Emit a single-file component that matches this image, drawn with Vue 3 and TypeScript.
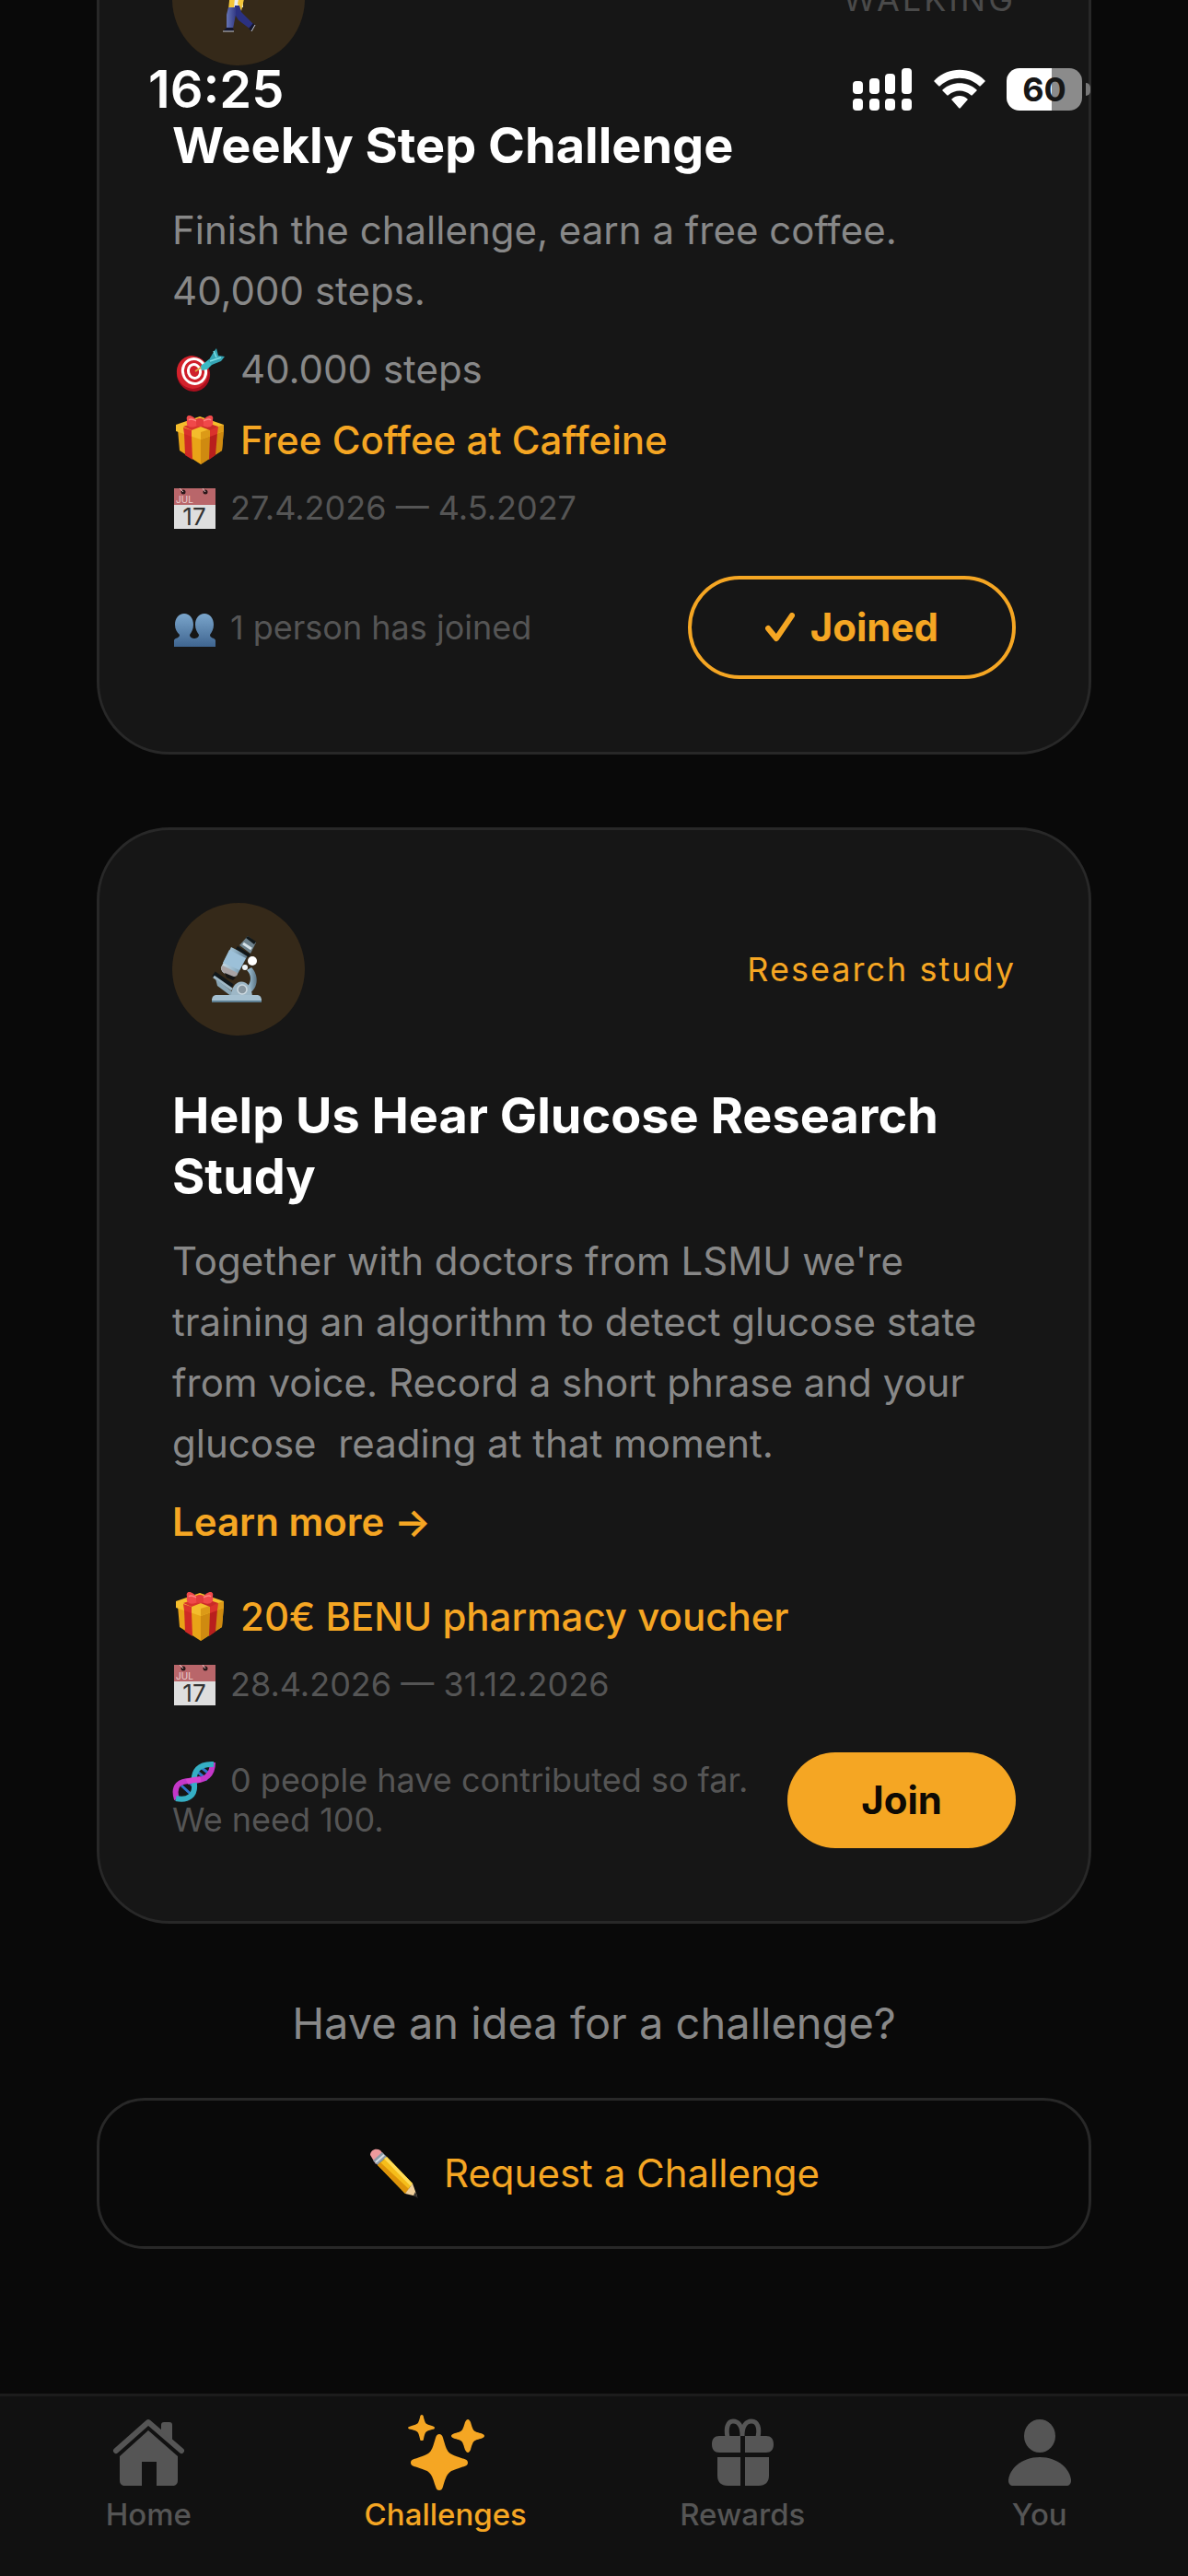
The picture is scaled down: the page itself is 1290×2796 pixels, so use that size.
<script setup lang="ts">
interface Challenge {
  id: string
  icon: string
  tag: string
  kind: 'activity' | 'study'
  title: string
  text: string
  goal?: string
  reward: string
  dates: string
  crowdIcon: string
  crowd: string
  joined: boolean
}

interface Tab {
  id: string
  label: string
  active: boolean
}

const challenges: Challenge[] = [
  {
    id: 'steps',
    icon: 'walker',
    tag: 'WALKING',
    kind: 'activity',
    title: 'Weekly Step Challenge',
    text: 'Finish the challenge, earn a free coffee.\n40,000 steps.',
    goal: '40.000 steps',
    reward: 'Free Coffee at Caffeine',
    dates: '27.4.2026 — 4.5.2027',
    crowdIcon: 'people',
    crowd: '1 person has joined',
    joined: true,
  },
  {
    id: 'glucose',
    icon: 'microscope',
    tag: 'Research study',
    kind: 'study',
    title: 'Help Us Hear Glucose Research Study',
    text: "Together with doctors from LSMU we're training an algorithm to detect glucose state from voice. Record a short phrase and your glucose  reading at that moment.",
    reward: '20€ BENU pharmacy voucher',
    dates: '28.4.2026 — 31.12.2026',
    crowdIcon: 'dna',
    crowd: '0 people have contributed so far. We need 100.',
    joined: false,
  },
]

const tabs: Tab[] = [
  { id: 'home', label: 'Home', active: false },
  { id: 'sparkles', label: 'Challenges', active: true },
  { id: 'rewards', label: 'Rewards', active: false },
  { id: 'you', label: 'You', active: false },
]
</script>

<template>
  <div class="screen">
    <svg class="sprite" aria-hidden="true">
      <defs>
        <linearGradient id="g-people" x1="0" y1="0" x2="0" y2="1">
          <stop offset="0" stop-color="#7ba6cc" />
          <stop offset="1" stop-color="#3f6590" />
        </linearGradient>
        <linearGradient id="g-steel" x1="0" y1="0" x2="1" y2="0">
          <stop offset="0" stop-color="#c9dbe6" />
          <stop offset="0.5" stop-color="#93b4c8" />
          <stop offset="1" stop-color="#5b7484" />
        </linearGradient>
        <linearGradient id="g-trousers" x1="0" y1="0" x2="1" y2="0">
          <stop offset="0" stop-color="#6574b4" />
          <stop offset="1" stop-color="#333a86" />
        </linearGradient>

        <symbol id="walker" viewBox="0 0 72 72">
          <circle cx="35" cy="8" r="7" fill="#f2c230" />
          <path d="M28 17h12l1 28H26z" fill="#e9edf0" />
          <path d="M28 20l-3 27 6-2 2-20zM39 22l3 14-3 13-4-8z" fill="#f3c63a" />
          <path d="M32 43h5l2 7 13 13-4 5-12-9-5-8z" fill="#2b3180" />
          <path d="M25 45l8 0 0 8-3 15h-7l0-15z" fill="url(#g-trousers)" />
          <path d="M23 67h7l1 4H19z M52 62l2 3-4 6-3-3z" fill="#15162b" />
          <path d="M19 71h12M54 64l-4 7" stroke="#c7cad2" stroke-width="1" fill="none" />
        </symbol>

        <symbol id="microscope" viewBox="0 0 72 72">
          <path d="M9 41l20 14" stroke="#11171a" stroke-width="6" />
          <path d="M9 44l20 14" stroke="#9fb8c6" stroke-width="3" />
          <path d="M11 46l20 16-2 4-16-12z" fill="#8aa6b5" />
          <path d="M50 34c8 8 8 22-2 28l-8-3c11-6 11-16 5-22z" fill="url(#g-steel)" />
          <path d="M28 66c0-22 22-22 23 0z" fill="#9db7c6" />
          <circle cx="40" cy="58" r="5" fill="#8997a0" stroke="#cddae1" stroke-width="1.5" />
          <path d="M7 70c0-4 2-6 5-6h44c3 0 5 2 5 6z" fill="#a5c0d0" />
          <path d="M7 70h54v2H7z" fill="#5e7e91" />
          <path d="M17 34l11-22 18 9-12 22c-6 3-18-3-17-9z" fill="url(#g-steel)" />
          <path d="M26 15l18 9-7 13-18-8z" fill="#9cc0d8" />
          <path d="M17 34c0 6 11 12 17 9l1-3-16-8z" fill="#a9a3a4" />
          <path d="M21 40l12 5-3 3-7-3z" fill="#151515" />
          <path d="M37 10l9-10 9 7-6 12z" fill="#6e828d" />
          <path d="M35 11l14 9-2 3-14-9zM46 0l9 6-2 3-9-7z" fill="#111719" />
          <path d="M41 8l9 6" stroke="#d5e2e9" stroke-width="3" />
          <circle cx="51" cy="27" r="5" fill="#fff" />
          <circle cx="43" cy="34" r="3" fill="#edf4f8" />
        </symbol>

        <symbol id="target" viewBox="0 0 56 56">
          <ellipse cx="21" cy="34" rx="18" ry="19" fill="#a90f1e" transform="rotate(-18 21 34)" />
          <ellipse cx="20" cy="32" rx="17" ry="18" fill="#d3222c" transform="rotate(-18 20 32)" />
          <ellipse cx="22" cy="31" rx="14" ry="15" fill="#fff" transform="rotate(-18 22 31)" />
          <ellipse cx="22" cy="31" rx="11" ry="12" fill="#cf1f2a" transform="rotate(-18 22 31)" />
          <ellipse cx="22" cy="31" rx="8" ry="9" fill="#fff" transform="rotate(-18 22 31)" />
          <ellipse cx="22" cy="31" rx="5" ry="6" fill="#cf1f2a" transform="rotate(-18 22 31)" />
          <path d="M23 31l9-6" stroke="#d9a441" stroke-width="2" />
          <path d="M29 25l9-7 5 4-7 7-6 1z" fill="#3cb9c4" />
          <path d="M37 20l6-10 3-4 2 8 7 1-4 5-10 4z" fill="#35a5b5" />
          <path d="M39 20l12-4M43 9l3 7" stroke="#7fe0e6" stroke-width="1.5" />
        </symbol>

        <symbol id="gift" viewBox="0 0 56 56">
          <path d="M4 17l25 8 25-8-2 23-23 15L6 40z" fill="#e9a417" />
          <path d="M29 25l25-8-2 23-23 15z" fill="#cf8a10" />
          <path d="M2 12l26-9 26 9v7l-25 9-27-9z" fill="#f4bd2c" />
          <path d="M29 20l25-8v7l-25 9z" fill="#dc9a17" />
          <path d="M11 21l8 3 1 26-8-5z" fill="#cf2a25" />
          <path d="M39 24l8-3-2 24-7 5z" fill="#b81f1d" />
          <path d="M10 15l9 3v7l-8-3zM39 17l9-3-1 8-8 3z" fill="#da322c" />
          <path d="M10 14l24-8 8 3-23 9z" fill="#d8332d" />
          <path d="M48 14L24 6l-8 3 23 9z" fill="#c92b27" />
          <path d="M26 9C20 0 12 0 14 7c-2 8 6 10 13 5zM30 9c6-9 14-9 12-2 2 8-6 10-13 5z" fill="#f0494a" />
          <path d="M26 9c-5-3-8-4-10-2M30 9c5-3 8-4 10-2" stroke="#ff8580" stroke-width="1.5" fill="none" />
          <rect x="24" y="5" width="8" height="9" rx="3" fill="#e23b3c" />
        </symbol>

        <symbol id="calendar" viewBox="0 0 48 48">
          <path d="M2 2h45v44H2z" fill="#dedede" />
          <path d="M2 2h45v18H2z" fill="#b9666a" />
          <circle cx="12" cy="6" r="2.500" fill="#2a1719" />
          <circle cx="36" cy="6" r="2.500" fill="#2a1719" />
          <path d="M8 2l4 4M33 2l3 4" stroke="#e5c4c5" stroke-width="1" />
          <text x="4" y="18" font-family="Inter, sans-serif" font-size="10" fill="#ecd3d4">JUL</text>
          <text x="24" y="42" text-anchor="middle" font-family="Inter, sans-serif" font-size="26" fill="#333">17</text>
        </symbol>

        <symbol id="people" viewBox="0 0 48 48">
          <path
            d="M13 8c6 0 10 5 10 12 0 5-2 8-4 11 0 4 5 4 5 4s5 0 5-4c-2-3-4-6-4-11 0-7 4-12 10-12s10 5 10 12c0 5-2 8-4 11 0 4 5 3 6 6v7H2v-7c1-3 6-2 6-6-3-3-5-6-5-11 0-7 4-12 10-12z"
            fill="url(#g-people)"
          />
        </symbol>

        <symbol id="dna" viewBox="0 0 48 48">
          <path d="M10 29l12 11M17 24l9 9M26 13l12 10M31 9l10 8" stroke="#2c74c9" stroke-width="3" />
          <path d="M5 44c-5-16 4-20 15-20 13 0 24-4 24-20" stroke="#c437c9" stroke-width="6" fill="none" />
          <path d="M4 43c14 3 21-4 20-15C22 13 29 5 45 6" stroke="#35afc4" stroke-width="6" fill="none" />
          <path d="M16 25c4-2 10-2 15-3" stroke="#d545d0" stroke-width="6" fill="none" />
        </symbol>

        <symbol id="pencil" viewBox="0 0 56 56">
          <path d="M2 8c0-5 6-8 11-5l5 6-10 9z" fill="#ee9a9d" />
          <path d="M5 14L15 5l5 5-10 9z" fill="#8d9ba8" />
          <path d="M8 16l9-8" stroke="#d6dde2" stroke-width="2" />
          <path d="M10 19l10-9 28 29-8 11z" fill="#f6be1a" />
          <path d="M10 19l3-3 31 29-4 5z" fill="#dd9309" />
          <path d="M17 12l3-2 28 29-2 3z" fill="#ffdc55" />
          <path d="M40 50l8-11 5 14z" fill="#f0cf9a" />
          <path d="M49 52l2-4 3 7z" fill="#33302d" />
        </symbol>

        <symbol id="home" viewBox="0 0 84 84">
          <path
            d="M7 39L42 8L78 39"
            fill="none"
            stroke="currentColor"
            stroke-width="6"
            stroke-linecap="round"
            stroke-linejoin="round"
          />
          <path d="M56 18V11c0-2 1-3 3-3h6c2 0 3 1 3 3v20z" />
          <path d="M42 17L74 45v26c0 4-2 6-6 6H51V51H35v26H17c-4 0-6-2-6-6V45z" />
        </symbol>

        <symbol id="sparkles" viewBox="0 0 84 84">
          <path
            d="M35 21c2 0 3 1 4 4 5 17 5 17 20 22 4 1 7 2 7 5s-3 4-7 5c-15 5-15 5-20 21-1 3-2 4-4 4s-3-1-4-4c-5-16-5-16-20-21-4-1-7-2-7-5s3-4 7-5c15-5 15-5 20-22 1-3 2-4 4-4z"
          />
          <path
            d="M66 5c1 0 2 1 3 3 3 10 3 10 11 12 3 1 4 2 4 3s-1 2-4 3c-8 2-8 2-11 12-1 2-2 3-3 3s-2-1-3-3c-3-10-3-10-11-12-3-1-4-2-4-3s1-2 4-3c8-2 8-2 11-12 1-2 2-3 3-3z"
          />
          <path
            d="M16 0c1 0 2 1 2 3 2 7 2 7 9 9 2 1 3 1 3 2s-1 2-3 2c-7 2-7 2-9 10 0 2-1 2-2 2s-2 0-2-2c-2-8-2-8-9-10-2 0-4-1-4-2s2-1 4-2c7-2 7-2 9-9 0-2 1-3 2-3z"
          />
        </symbol>

        <symbol id="rewards" viewBox="0 0 84 84">
          <path
            d="M42 23c0-12-5-16-10-16-6 0-8 8-6 17M42 23c0-12 5-16 10-16 7 0 9 8 7 17"
            fill="none"
            stroke="currentColor"
            stroke-width="5"
          />
          <path d="M17 23h23v18H17c-5 0-8-3-8-9s3-9 8-9zM45 23h23c5 0 8 3 8 9s-3 9-8 9H45z" />
          <path d="M15 46h25v31H26c-7 0-11-4-11-11zM45 46h26v20c0 7-4 11-11 11H45z" />
        </symbol>

        <symbol id="you" viewBox="0 0 84 84">
          <ellipse cx="42" cy="23" rx="17" ry="18" />
          <path d="M42 46c20 0 33 13 34 25 0 4-2 6-5 6H13c-3 0-5-2-5-6 1-12 14-25 34-25z" />
        </symbol>
      </defs>
    </svg>

    <header class="status">
      <time class="clock">16:25</time>
      <div class="indicators">
        <svg class="signal" viewBox="0 0 65 46" aria-label="Signal">
          <rect x="0" y="14" width="11" height="14" rx="4" />
          <rect x="18" y="11" width="11" height="17" rx="4" />
          <rect x="35" y="6" width="11" height="22" rx="4" />
          <rect x="53" y="0" width="11" height="28" rx="4" />
          <rect v-for="x in [0, 18, 35, 53]" :key="x" :x="x" y="33" width="11" height="13" rx="4" />
        </svg>
        <svg class="wifi" viewBox="0 0 56 46" aria-label="Wi-Fi">
          <path d="M1 13C16-2 40-2 55 13c1 1 1 1 0 2l-4 4c-1 1-1 1-2 0-12-11-30-11-42 0-1 1-1 1-2 0l-4-4c-1-1-1-1 0-2z" />
          <path d="M10 23c10-9 26-9 36 0 1 1 1 1 0 2l-4 4c-1 1-1 1-2 0-7-6-17-6-24 0-1 1-1 1-2 0l-4-4c-1-1-1-1 0-2z" />
          <path d="M20 33c4-4 12-4 16 0 1 1 1 1 0 2l-7 8c-1 1-1 1-2 0l-7-8c-1-1-1-1 0-2z" />
        </svg>
        <div class="battery"><span class="level">60</span></div>
      </div>
    </header>

    <main class="content">
      <article v-for="c in challenges" :key="c.id" class="card">
        <div class="card-top">
          <span class="badge"><svg class="badge-icon"><use :href="'#' + c.icon" /></svg></span>
          <span class="tag" :class="c.kind">{{ c.tag }}</span>
        </div>
        <h2 class="title">{{ c.title }}</h2>
        <p class="text">{{ c.text }}</p>
        <a v-if="c.kind === 'study'" class="more" href="#">Learn more →</a>
        <p v-if="c.goal" class="row"><svg class="emoji"><use href="#target" /></svg>{{ c.goal }}</p>
        <p class="row reward"><svg class="emoji"><use href="#gift" /></svg>{{ c.reward }}</p>
        <p class="dates"><svg class="emoji small"><use href="#calendar" /></svg>{{ c.dates }}</p>
        <div class="card-foot">
          <p class="crowd"><svg class="emoji small"><use :href="'#' + c.crowdIcon" /></svg>{{ c.crowd }}</p>
          <button v-if="c.joined" type="button" class="pill outline">
            <svg class="tick" viewBox="0 0 32 32"><path d="M3 17l9 11L29 3" /></svg>Joined
          </button>
          <button v-else type="button" class="pill solid">Join</button>
        </div>
      </article>

      <section class="idea">
        <p class="question">Have an idea for a challenge?</p>
        <button type="button" class="request">
          <svg class="pencil"><use href="#pencil" /></svg>Request a Challenge
        </button>
      </section>
    </main>

    <nav class="tabs">
      <a v-for="t in tabs" :key="t.id" href="#" class="tab" :class="{ active: t.active }">
        <svg class="tab-icon"><use :href="'#' + t.id" /></svg>
        <span>{{ t.label }}</span>
      </a>
    </nav>
  </div>
</template>

<style>
html,
body {
  background: #090909;
}
</style>

<style scoped>
.screen {
  position: relative;
  box-sizing: border-box;
  height: 100vh;
  overflow: hidden;
  display: flex;
  flex-direction: column;
  background: #090909;
  color: #888;
  font-family: Inter, 'Liberation Sans', sans-serif;
  font-size: 42px;
}

.sprite {
  position: absolute;
  width: 0;
  height: 0;
}

h2,
p {
  margin: 0;
}

button {
  font: inherit;
  cursor: pointer;
}

a {
  text-decoration: none;
}

/* Status bar floats over the scrolled list */
.status {
  position: absolute;
  z-index: 2;
  top: 64px;
  left: 0;
  right: 0;
  display: flex;
  align-items: center;
  justify-content: space-between;
  padding: 0 115px 0 161px;
  color: #fff;
}

.clock {
  font-size: 56px;
  line-height: 66px;
  font-weight: 600;
}

.indicators {
  display: flex;
  align-items: center;
  gap: 23px;
  fill: #fff;
}

.signal {
  width: 65px;
  height: 46px;
}

.wifi {
  width: 56px;
  height: 46px;
}

.battery {
  position: relative;
  display: flex;
  justify-content: center;
  width: 82px;
  height: 46px;
  border-radius: 14px;
  background: linear-gradient(90deg, #fff 60%, #8b8b8b 60%);
}

.battery::after {
  content: '';
  position: absolute;
  right: -9px;
  top: 16px;
  width: 5px;
  height: 14px;
  border-radius: 0 5px 5px 0;
  background: #777;
}

.level {
  font-size: 36px;
  line-height: 46px;
  font-weight: 700;
  color: #161616;
}

/* List, scrolled part of the way into the first card */
.content {
  flex: 1;
  min-height: 0;
  display: flex;
  flex-direction: column;
  gap: 79px;
  margin-top: -155px;
  padding: 0 105px;
}

.card {
  display: flex;
  flex-direction: column;
  gap: 26px;
  padding: 79px;
  border: 3px solid #282828;
  border-radius: 79px;
  background: #161616;
}

.card-top {
  display: flex;
  align-items: center;
  justify-content: space-between;
  margin-bottom: 28px;
}

.badge {
  display: flex;
  align-items: center;
  justify-content: center;
  width: 144px;
  height: 144px;
  border-radius: 50%;
  background: #352919;
}

.badge-icon {
  width: 72px;
  height: 72px;
}

.tag {
  font-size: 36px;
  line-height: 44px;
}

.tag.activity {
  color: #4a4a4a;
  letter-spacing: 3px;
}

.tag.study {
  color: #f5a623;
  letter-spacing: 2px;
}

.title {
  font-size: 54px;
  line-height: 66px;
  font-weight: 700;
  color: #fff;
}

.text {
  line-height: 66px;
  white-space: pre-wrap;
}

.more {
  align-self: flex-start;
  margin-bottom: 26px;
  line-height: 51px;
  font-weight: 600;
  color: #f5a623;
}

.row {
  line-height: 51px;
}

.reward {
  font-weight: 500;
  color: #f5a623;
}

.dates {
  font-size: 36px;
  line-height: 44px;
  color: #555;
}

.emoji {
  width: 56px;
  height: 56px;
  margin: -12px 16px -12px 2px;
  vertical-align: baseline;
}

.emoji.small {
  width: 48px;
  height: 48px;
  margin: -12px 15px -12px 0;
}

.card-foot {
  display: flex;
  align-items: center;
  justify-content: space-between;
  gap: 26px;
  margin-top: 26px;
}

.crowd {
  font-size: 36px;
  line-height: 43px;
  color: #555;
}

.pill {
  flex: none;
  display: flex;
  align-items: center;
  gap: 17px;
  padding: 26px 80px;
  border: 0;
  border-radius: 56px;
  line-height: 52px;
  font-weight: 700;
}

.outline {
  border: 4px solid #f5a623;
  background: none;
  color: #f5a623;
}

.solid {
  background: #f5a623;
  color: #0e0a04;
}

.tick {
  width: 32px;
  height: 32px;
  fill: none;
  stroke: #f5a623;
  stroke-width: 6px;
  stroke-linecap: round;
  stroke-linejoin: round;
}

.idea {
  display: flex;
  flex-direction: column;
  gap: 52px;
  text-align: center;
}

.question {
  font-size: 47px;
  line-height: 58px;
}

.request {
  display: flex;
  align-items: center;
  justify-content: center;
  gap: 26px;
  padding: 53px;
  border: 3px solid #282828;
  border-radius: 52px;
  background: none;
  line-height: 52px;
  color: #f5a623;
}

.pencil {
  width: 56px;
  height: 56px;
  margin: -2px 0;
}

.tabs {
  position: relative;
  flex: none;
  display: flex;
  box-sizing: border-box;
  height: 198px;
  border-top: 3px solid #1c1c1c;
  background: #111;
}

.tab {
  flex: 1;
  display: flex;
  flex-direction: column;
  align-items: center;
  gap: 4px;
  padding-top: 20px;
  font-size: 33px;
  line-height: 40px;
  font-weight: 500;
  color: #555;
  fill: #555;
}

.tab.active {
  color: #f5a623;
  fill: #f5a623;
}

.tab-icon {
  width: 84px;
  height: 84px;
}
</style>
